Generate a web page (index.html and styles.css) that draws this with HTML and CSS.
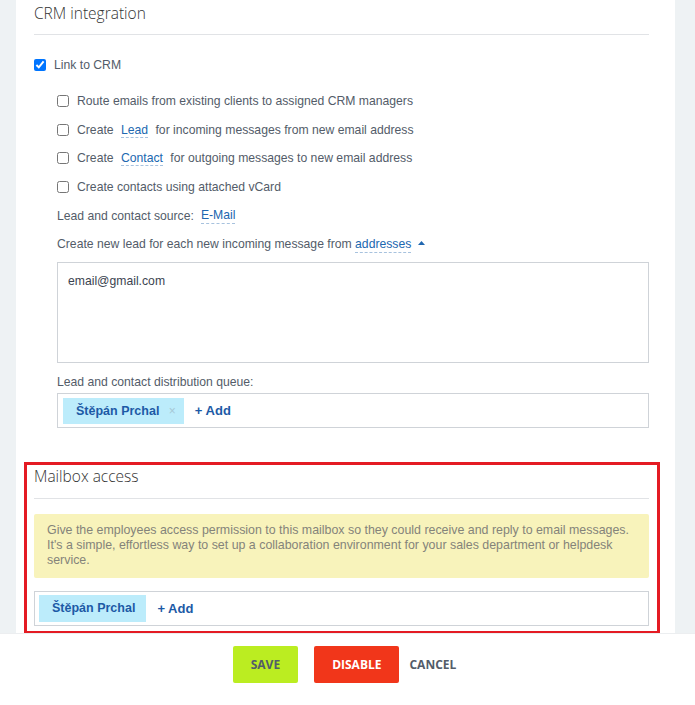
FILE: index.html
```html
<!DOCTYPE html>
<html lang="en">
<head>
    <meta charset="UTF-8">
    <title>Mailbox settings</title>
    <link rel="stylesheet" href="styles.css">
</head>
<body>

    <div class="panel">

        <!-- CRM integration -->
        <div class="section crm">
            <h2 class="title">CRM integration</h2>

            <label class="row main-row">
                <input type="checkbox" checked>
                <span>Link to CRM</span>
            </label>

            <div class="options">
                <label class="row">
                    <input type="checkbox">
                    <span>Route emails from existing clients to assigned CRM managers</span>
                </label>
                <label class="row">
                    <input type="checkbox">
                    <span>Create <a class="link">Lead</a> for incoming messages from new email address</span>
                </label>
                <label class="row">
                    <input type="checkbox">
                    <span>Create <a class="link">Contact</a> for outgoing messages to new email address</span>
                </label>
                <label class="row">
                    <input type="checkbox">
                    <span>Create contacts using attached vCard</span>
                </label>
                <div class="row">Lead and contact source: <a class="link link-wide">E-Mail</a></div>
                <div class="row">
                    Create new lead for each new incoming message from&nbsp;<a class="link link-tight">addresses</a>
                    <svg class="arrow" width="7" height="4" viewBox="0 0 7 4"><path d="M0 4 L3.5 0 L7 4 Z" fill="#2067b0"/></svg>
                </div>

                <div class="textarea">email@gmail.com</div>

                <div class="row label">Lead and contact distribution queue:</div>
                <div class="queue">
                    <span class="tag">Štěpán Prchal <span class="tag-x">×</span></span>
                    <a class="add">+ Add</a>
                </div>
            </div>
        </div>

        <!-- Mailbox access -->
        <div class="section access">
            <h2 class="title">Mailbox access</h2>
            <div class="alert">
                Give the employees access permission to this mailbox so they could receive and reply to email messages.
                It's a simple, effortless way to set up a collaboration environment for your sales department or helpdesk
                service.
            </div>
            <div class="queue">
                <span class="tag">Štěpán Prchal</span>
                <a class="add">+ Add</a>
            </div>
        </div>

    </div>

    <!-- Footer buttons -->
    <div class="footer">
        <button class="btn btn-save">Save</button>
        <button class="btn btn-disable">Disable</button>
        <button class="btn-cancel">Cancel</button>
    </div>

</body>
</html>
```

FILE: styles.css
```css
body {
    margin: 0;
    padding: 0;
    background-color: #eef2f4;
    font-family: "Liberation Sans", Arial, sans-serif;
    font-size: 12.2px;
    color: #535c69;
}

/* White settings panel */
.panel {
    background-color: #fff;
    margin: 0 20px 0 16px;
    padding: 0 15px 0 8px;
}

.title {
    margin: 0;
    font-family: "Open Sans", sans-serif;
    font-size: 15.5px;
    font-weight: 300;
    line-height: 22px;
    color: #333;
    padding: 2px 0 10px;
    border-bottom: 1px solid #e1e3e6;
}

/* CRM section */
.crm {
    margin: 0 11px 0 10px;
    padding-bottom: 34px;
}

.row {
    display: flex;
    align-items: center;
    line-height: 20px;
    height: 20px;
    white-space: nowrap;
}

.row input {
    margin: 0 8px 0 0;
    width: 12px;
    height: 12px;
}

.main-row {
    margin-top: 20px;
}

.options {
    margin: 16px 0 0 23px;
    display: flex;
    flex-direction: column;
    gap: 8.7px;
}

.link {
    color: #2067b0;
    border-bottom: 1px dashed #a7c2de;
    margin: 0 4px;
    line-height: 16px;
}

.link-wide {
    margin-left: 7px;
}

.link-tight {
    margin: 0;
}

.arrow {
    margin-left: 7px;
    margin-bottom: 2px;
}

.textarea {
    height: 79px;
    border: 1px solid #cfd3d8;
    padding: 10px;
    margin-top: -0.7px;
    line-height: 16px;
    color: #3b4350;
}

.label {
    margin-top: 0.3px;
}

.queue {
    display: flex;
    align-items: center;
    height: 33px;
    border: 1px solid #cfd3d8;
    padding: 0 5px;
    margin-top: -7.7px;
}

.tag {
    display: inline-block;
    background-color: #bcecfb;
    color: #1c5aa6;
    font-weight: bold;
    font-size: 12.5px;
    line-height: 26px;
    padding: 0 8px 0 13px;
}

.tag-x {
    color: #a6c8d6;
    font-weight: normal;
    font-size: 12px;
    margin-left: 6px;
}

.add {
    color: #1c5aa6;
    font-weight: bold;
    font-size: 13px;
    margin-left: 11px;
}

/* Mailbox access, highlighted */
.access {
    border: 3px solid #e41b23;
    padding: 0 8px 5px 7px;
}

.access .title {
    padding: 0 0 11px;
}

.alert {
    background-color: #f8f3bb;
    color: #84837a;
    font-size: 12.4px;
    line-height: 15px;
    padding: 9px 13px 10px;
    margin: 15px 0 13px;
    border-radius: 2px;
}

.access .queue {
    margin-top: 0;
    padding: 0 4px;
}

.access .tag {
    line-height: 27px;
    padding: 0 11px 0 13px;
}

/* Footer */
.footer {
    background-color: #fff;
    height: 72px;
    display: flex;
    justify-content: center;
    align-items: flex-start;
    padding-top: 12px;
    box-sizing: border-box;
    box-shadow: 0 -1px 0 #eceef0;
    position: relative;
}

.btn {
    height: 37px;
    border: none;
    border-radius: 2px;
    font-family: "Open Sans", sans-serif;
    font-weight: bold;
    font-size: 12px;
    text-transform: uppercase;
    padding: 0 18px;
    cursor: pointer;
}

.btn-save {
    background-color: #bbed21;
    color: #535c69;
}

.btn-disable {
    background-color: #f1361a;
    color: #fff;
    margin-left: 16px;
}

.btn-cancel {
    height: 37px;
    border: none;
    background: transparent;
    font-family: "Open Sans", sans-serif;
    font-weight: bold;
    font-size: 12px;
    text-transform: uppercase;
    color: #535c69;
    margin-left: 4px;
    cursor: pointer;
}
```
